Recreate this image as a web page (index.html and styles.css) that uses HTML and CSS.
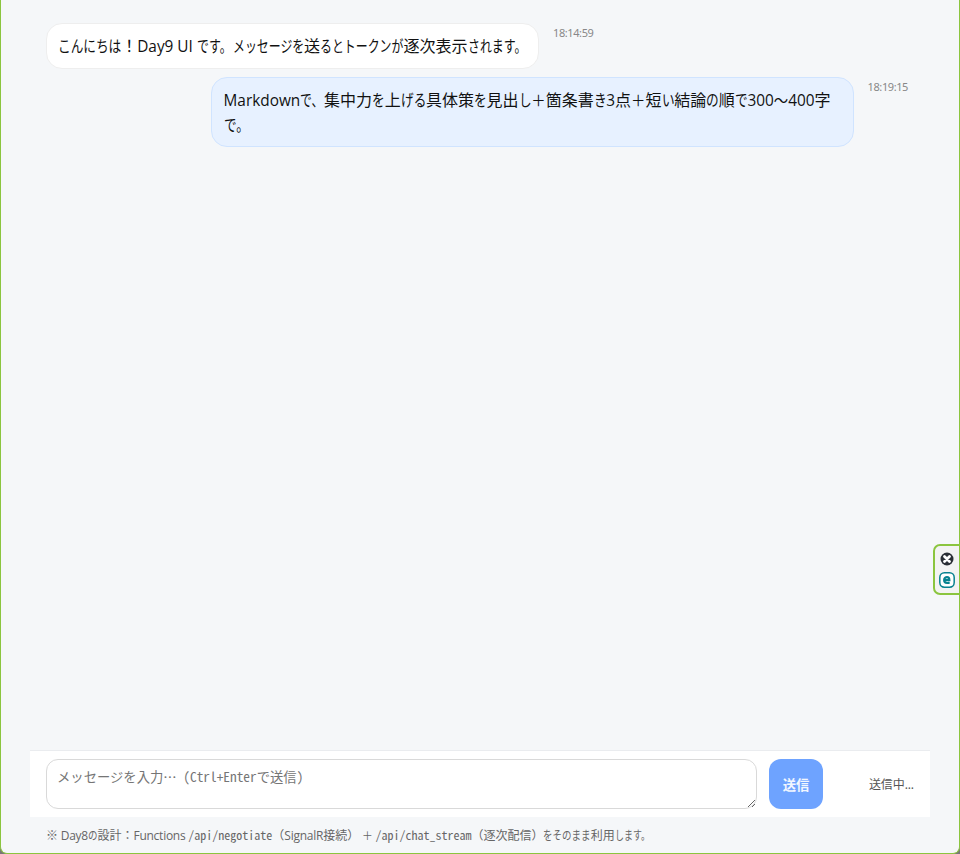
FILE: index.html
```html
<!DOCTYPE html>
<html lang="ja">
<head>
<meta charset="utf-8">
<title>Day9 UI</title>
<link rel="stylesheet" href="styles.css">
</head>
<body>
<div class="window">
  <div class="app">
    <main class="messages">
      <div class="row">
        <div class="bubble"><span class="kana n5">こんにちは</span>！<span class="latin">Day9 UI </span><span class="kana tight n3">です。</span><span class="kana tight n6">メッセージを</span>送<span class="kana tight n7">るとトークンが</span>逐次表示<span class="kana tight n5">されます。</span></div>
        <time class="time">18:14:59</time>
      </div>
      <div class="row user">
        <div class="bubble"><span class="latin">Markdown</span><span class="kana tight n2">で、</span>集中力<span class="kana n1">を</span>上<span class="kana n2">げる</span>具体策<span class="kana n1">を</span>見出<span class="kana n1">し</span><span class="plus">＋</span>箇条書<span class="kana n1">き</span><span class="latin">3</span>点<span class="plus">＋</span>短<span class="kana n1">い</span>結論<span class="kana n1">の</span>順<span class="kana n1">で</span><span class="latin">300</span><span class="plus">～</span><span class="latin">400</span>字<br><span class="kana n2">で。</span></div>
        <time class="time">18:19:15</time>
      </div>
    </main>
    <form class="composer">
      <textarea class="input" placeholder="メッセージを入力… （Ctrl+Enterで送信）"></textarea>
      <button class="send" type="button" disabled>送信</button>
      <span class="status">送信中...</span>
    </form>
    <footer class="hint">※ <span class="latin">Day8</span><span class="kana n1">の</span>設計：<span class="latin">Functions </span><code>/api/negotiate</code>（<span class="latin">SignalR</span>接続） <span class="plus">＋</span> <code>/api/chat_stream</code>（逐次配信）<span class="kana n5">をそのまま</span>利用<span class="kana tight n4">します。</span></footer>
  </div>
  <aside class="dock">
    <svg width="14" height="14" viewBox="0 0 14 14"><circle cx="7" cy="7" r="6.5" fill="#2b2f36"/><path d="M4.5 4.500l5 5M9.500 4.500l-5 5" stroke="#fff" stroke-width="2.800" stroke-linecap="round"/></svg>
    <svg width="16" height="16" viewBox="0 0 16 16"><rect x=".8" y=".8" width="14.4" height="14.4" rx="4.6" fill="#fff" stroke="#078290" stroke-width="1.5"/><path d="M5.3 8.1h5.100c0-2-1-3-2.400-3S5.1 6.2 5.1 8s1.100 3 3 3c1 0 1.800-.2 2.500-.7" fill="none" stroke="#078290" stroke-width="2.100"/></svg>
  </aside>
</div>
</body>
</html>
```
FILE: styles.css
```css
* { box-sizing: border-box; }
body {
  margin: 0;
  height: 854px;
  overflow: hidden;
  background: #777;
  color: #111;
  font: 16px/24px "Noto Sans CJK JP", sans-serif;
}
.window {
  position: relative;
  height: 854px;
  border: 1px solid #8bc53f;
  border-top: 0;
  border-radius: 0 0 7px 7px;
  background: #f5f7f9;
}
.app {
  display: flex;
  flex-direction: column;
  width: 900px;
  height: 853px;
  margin-left: 29px;
}
.messages {
  flex: 1;
  display: flex;
  flex-direction: column;
  gap: 8px;
  padding: 23px 16px 0;
}
.row { display: flex; align-items: flex-start; gap: 14px; }
.row.user { justify-content: flex-end; padding-right: 6px; }
.bubble {
  width: 493px;
  height: 46px;
  padding: 9px 11px;
  border: 1px solid #eee;
  border-radius: 16px;
  background: #fff;
  font-size: 16px;
  white-space: nowrap;
}
.user .bubble { width: 643px; height: 70px; padding-left: 12px; background: #e7f1ff; border-color: #d0e4ff; }
.latin { font-family: "Open Sans", sans-serif; font-size: .96em; line-height: 1; }
/* Condensed kana: each character advances --s em */
.kana {
  --s: .79;
  display: inline-block;
  width: calc(var(--n) * var(--s) * 1em);
  transform: scaleX(var(--s));
  transform-origin: 0 50%;
}
.kana.tight { --s: .745; }
.n1 { --n: 1; }
.n2 { --n: 2; }
.n3 { --n: 3; }
.n4 { --n: 4; }
.n5 { --n: 5; }
.n6 { --n: 6; }
.n7 { --n: 7; }
/* Full-width signs drawn slightly smaller than the surrounding kanji */
.plus { font-size: .9em; }
.time {
  padding-top: 2px;
  color: #888;
  font: 11px/16px "Noto Sans", sans-serif;
  letter-spacing: -.4px;
}
.composer {
  display: flex;
  align-items: center;
  height: 67px;
  padding: 0 16px;
  border-top: 1px solid #eaecef;
  background: #fff;
}
.input {
  width: 711px;
  height: 50px;
  margin: 0;
  padding: 8px 10px;
  border: 1px solid #d9d9d9;
  border-radius: 12px;
  background: #fff;
  font: 13.333px/18px "Noto Sans CJK JP", sans-serif;
  font-feature-settings: "hwid";
  resize: vertical;
}
.input::placeholder { color: #757575; }
.send {
  width: 54px;
  height: 50px;
  margin-left: 12px;
  padding: 0;
  border: 0;
  border-radius: 12px;
  background: #6ea3ff;
  color: #f2f7ff;
  font: 700 13.333px "Noto Sans CJK JP", sans-serif;
}
.status { margin-left: auto; color: #555; font: 12px/24px "Noto Sans", "Noto Sans CJK JP", sans-serif; letter-spacing: -.1px; padding-top: 2px; white-space: nowrap; }
.hint {
  height: 36px;
  padding: 9px 16px 0;
  color: #666;
  font-size: 12px;
  line-height: 18px;
  white-space: nowrap;
}
.hint .latin { font-size: 12px; letter-spacing: -.25px; }
code { font: 12px/18px "Noto Sans CJK JP", monospace; font-feature-settings: "hwid"; }
.dock {
  position: absolute;
  right: -1px;
  top: 544px;
  display: flex;
  flex-direction: column;
  align-items: center;
  gap: 6px;
  width: 27px;
  height: 51px;
  padding-top: 6px;
  border: 2px solid #8bc53f;
  border-right-width: 1px;
  border-radius: 7px 0 0 7px;
  background: #f3f3f3;
}
```
